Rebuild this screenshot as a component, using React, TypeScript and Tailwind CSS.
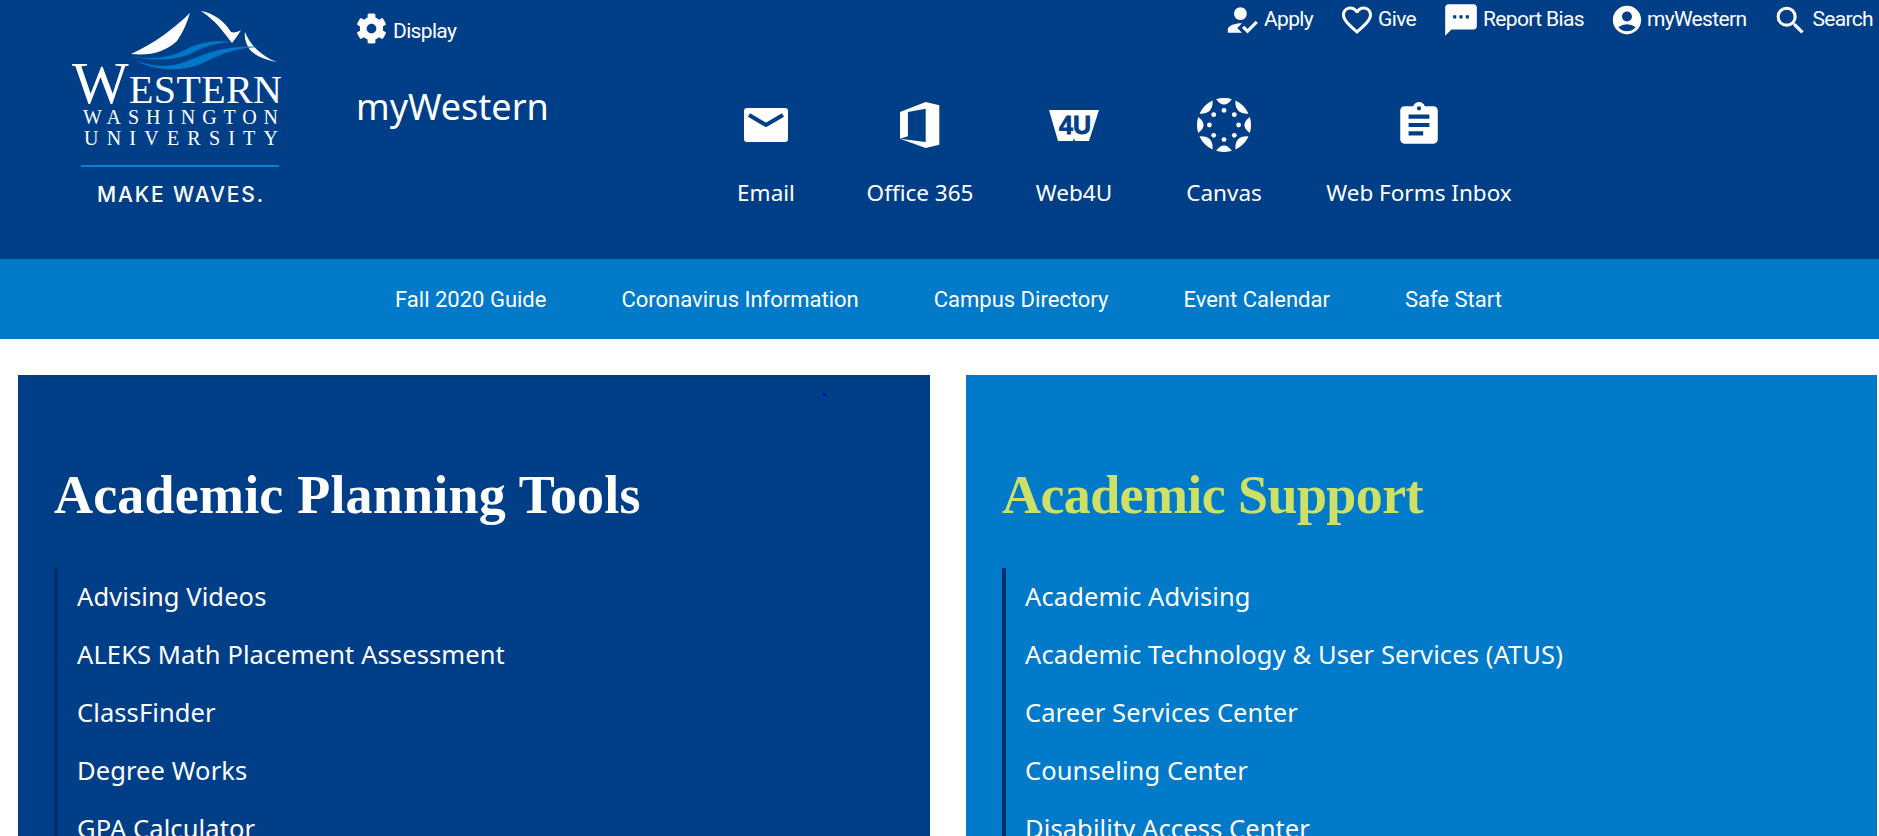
import { MdAssignment, MdHowToReg, MdFavoriteBorder, MdSms, MdAccountCircle, MdSearch } from "react-icons/md";
import { FaCog } from "react-icons/fa";
import type { ReactNode } from "react";

const TOP_LINKS = [
  { label: "Apply", icon: <MdHowToReg className="h-[38px] w-[38px]" /> },
  { label: "Give", icon: <MdFavoriteBorder className="h-[36px] w-[36px]" /> },
  { label: "Report Bias", icon: <MdSms className="h-[38px] w-[38px]" /> },
  { label: "myWestern", icon: <MdAccountCircle className="h-[34px] w-[34px]" /> },
  { label: "Search", icon: <MdSearch className="h-[37px] w-[37px]" /> },
];

const NAV_LINKS = ["Fall 2020 Guide", "Coronavirus Information", "Campus Directory", "Event Calendar", "Safe Start"];

const PLANNING = ["Advising Videos", "ALEKS Math Placement Assessment", "ClassFinder", "Degree Works", "GPA Calculator"];
const SUPPORT = [
  "Academic Advising",
  "Academic Technology & User Services (ATUS)",
  "Career Services Center",
  "Counseling Center",
  "Disability Access Center",
];

function Logo() {
  return (
    <svg viewBox="0 0 356 259" className="h-[259px] w-[356px] shrink-0">
      <path fill="#fff" d="M190 13C172 30 155 43 131 54C150 56 165 52 177 41C183 32 187 23 190 13Z" />
      <path fill="#fff" d="M201 11C214 13 225 22 231 32C234 33 238 32 241 30C238 35 236 38 232 43C226 36 218 22 201 11Z" />
      <path fill="#fff" d="M245 32C250 45 262 57 277 62C268 60 258 58 250 50C246 44 244 38 245 32Z" />
      <path fill="#0077c8" d="M130 56C150 60 170 58 185 50C200 42 215 40 232 42C215 43 205 46 190 54C175 60 155 62 130 56Z" />
      <path fill="#0077c8" d="M135 60C150 66 165 69 185 62C205 54 225 44 265 47C240 47 225 52 205 62C185 72 155 72 135 60Z" />
      <text x="72" y="103" fill="#fff" fontFamily="'Liberation Serif', serif" fontSize="40" textLength="210">
        <tspan fontSize="60">W</tspan>ESTERN
      </text>
      <text x="83" y="124" fill="#fff" fontFamily="'Liberation Serif', serif" fontSize="20" textLength="195">WASHINGTON</text>
      <text x="84" y="145" fill="#fff" fontFamily="'Liberation Serif', serif" fontSize="20" textLength="194">UNIVERSITY</text>
      <rect x="81" y="165" width="198" height="2" fill="#0a84d0" />
      <text x="97" y="202" fill="#fff" fontFamily="Inter, sans-serif" fontWeight="500" fontSize="21" textLength="166">MAKE WAVES.</text>
    </svg>
  );
}

function EmailIcon() {
  return (
    <svg viewBox="0 0 44 34" className="h-[34px] w-[44px]">
      <rect width="44" height="34" rx="3" fill="#fff" />
      <path d="M5 7L22 17L39 7" fill="none" stroke="#003f87" strokeWidth="4" />
    </svg>
  );
}

function OfficeIcon() {
  return (
    <svg viewBox="0 0 40 46" className="h-[46px] w-[40px]">
      <path fill="#fff" d="M0 10L25.7 0L39.3 3.3V42.7L25.7 46L0 36.7L25.7 40V6.7L7.9 10V34.3L0 36.7Z" />
    </svg>
  );
}

function Web4UIcon() {
  return (
    <svg viewBox="0 0 50 31" className="h-[31px] w-[50px]">
      <path fill="#fff" d="M0 0H50L40 31H26L25 28L24 31H9Z" />
      <text x="26" y="24" textAnchor="middle" fill="#003f87" stroke="#003f87" strokeWidth="0.8" fontFamily="'Liberation Sans', sans-serif" fontWeight="700" fontSize="25">4U</text>
    </svg>
  );
}

function polar(angle: number, r: number) {
  const a = (angle * Math.PI) / 180;
  return `${27 + r * Math.cos(a)} ${27 + r * Math.sin(a)}`;
}

function CanvasIcon() {
  const angles = [0, 45, 90, 135, 180, 225, 270, 315];
  return (
    <svg viewBox="0 0 54 54" className="h-[54px] w-[54px]">
      {angles.map((a) => {
        const span = a % 90 === 0 ? 17 : 20;
        return (
          <path
            key={a}
            fill="#fff"
            d={`M${polar(a - span, 27)}A27 27 0 0 1 ${polar(a + span, 27)}Q${polar(a, 15)} ${polar(a - span, 27)}Z`}
          />
        );
      })}
      {angles.map((a) => {
        const [cx, cy] = polar(a, 14.6).split(" ");
        return <circle key={a} cx={cx} cy={cy} r="2.4" fill="#fff" />;
      })}
    </svg>
  );
}

function QuickLink({ icon, label, width }: { icon: ReactNode; label: string; width: string }) {
  return (
    <a className={`flex flex-col items-center ${width}`}>
      <div className="flex h-[56px] items-center justify-center">{icon}</div>
      <span className="mt-[26px] whitespace-nowrap text-[22.5px] leading-[28px]">{label}</span>
    </a>
  );
}

function Panel({ title, items, bg, titleClass, children }: { title: string; items: string[]; bg: string; titleClass: string; children?: ReactNode }) {
  return (
    <section className={`relative h-full pl-[36px] pt-[90px] ${bg}`}>
      {children}
      <h2 className={`mb-[43px] font-['Liberation_Serif',serif] text-[54px] font-bold leading-[60px] ${titleClass}`}>{title}</h2>
      <ul className="border-l-4 border-[#002f6c] pl-[19px]">
        {items.map((item) => (
          <li key={item} className="flex h-[58px] items-center pb-[2px] font-['Noto_Sans',sans-serif] text-[25.5px] tracking-[0.1px] text-white">
            {item}
          </li>
        ))}
      </ul>
    </section>
  );
}

export default function App() {
  return (
    <div className="flex h-[836px] flex-col overflow-hidden bg-white font-['Roboto',sans-serif] text-white">
      <header className="flex h-[259px] shrink-0 bg-[#003f87]">
        <Logo />
        <div className="flex-1">
          <div className="flex h-[85px] items-start justify-between pr-[6px]">
            <a className="flex items-center gap-[6px] pt-[9px] text-[21px] tracking-[-0.65px]">
              <FaCog className="h-[31px] w-[31px]" />
              <span className="mt-[7px]">Display</span>
            </a>
            <nav className="flex gap-[26px] pt-[6px]">
              {TOP_LINKS.map((link) => (
                <a key={link.label} className="flex h-[28px] items-center gap-[3px] text-[21px] tracking-[-0.65px]">
                  {link.icon}
                  <span>{link.label}</span>
                </a>
              ))}
            </nav>
          </div>
          <div className="flex items-start">
            <h1 className="w-[360px] font-['Noto_Sans',sans-serif] text-[36px] leading-[44px]">myWestern</h1>
            <div className="flex gap-[50px] pt-[12px] font-['Noto_Sans',sans-serif]">
              <QuickLink icon={<EmailIcon />} label="Email" width="w-[100px]" />
              <QuickLink icon={<OfficeIcon />} label="Office 365" width="w-[108px]" />
              <QuickLink icon={<Web4UIcon />} label="Web4U" width="w-[100px]" />
              <QuickLink icon={<CanvasIcon />} label="Canvas" width="w-[100px]" />
              <QuickLink icon={<MdAssignment className="h-[50px] w-[50px]" />} label="Web Forms Inbox" width="w-[190px]" />
            </div>
          </div>
        </div>
      </header>

      <nav className="flex h-[80px] shrink-0 items-center justify-center gap-[75px] bg-[#007ac9] pl-[18px] text-[22px]">
        {NAV_LINKS.map((link) => (
          <a key={link}>{link}</a>
        ))}
      </nav>

      <main className="grid min-h-0 flex-1 grid-cols-[912px_1fr] gap-[36px] pl-[18px] pr-[2px] pt-[36px]">
        <Panel title="Academic Planning Tools" items={PLANNING} bg="bg-[#003f87]" titleClass="tracking-[0.2px] text-white">
          <span className="absolute left-[805px] top-[18px] h-[3px] w-[3px] bg-[#0000c8]" />
        </Panel>
        <Panel title="Academic Support" items={SUPPORT} bg="bg-[#007ac9]" titleClass="tracking-[-0.6px] text-[#cfe066]" />
      </main>
    </div>
  );
}
